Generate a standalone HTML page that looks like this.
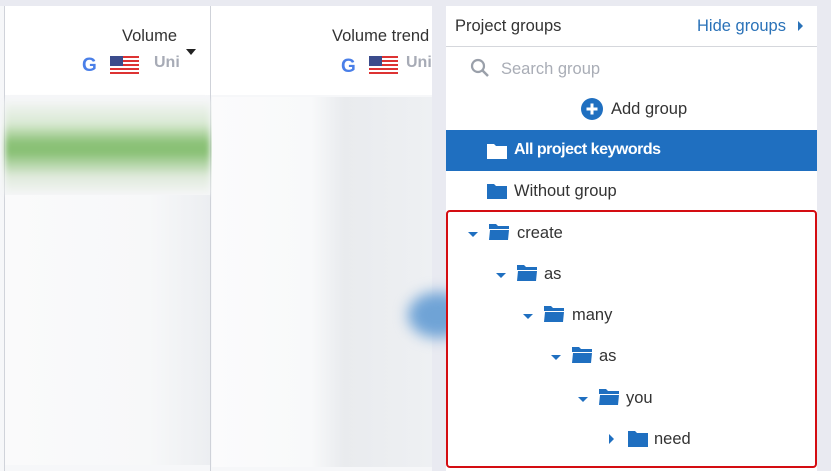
<!DOCTYPE html>
<html><head><style>
body{margin:0;width:831px;height:471px;background:#e9eaf1;font-family:"Liberation Sans",sans-serif;position:relative;overflow:hidden}
.abs{position:absolute}
.t{font-size:16px;color:#333}
</style></head><body>
<div class="abs" style="left:0;top:6px;width:432px;height:465px;background:#f6f7f9"></div>
<div class="abs" style="left:4px;top:6px;width:428px;height:89px;background:#fff"></div>
<div class="abs" style="left:4px;top:6px;width:1px;height:465px;background:#d0d3da"></div>
<div class="abs" style="left:210px;top:6px;width:1px;height:465px;background:#cfd2d9"></div>
<div class="abs" style="left:5px;top:100px;width:205px;height:95px;background:linear-gradient(#f4f5f6,#d9e9d3 25%,#8cc278 45%,#88c074 55%,#dfeadb 80%,#f4f5f6);filter:blur(3px)"></div>
<div class="abs" style="left:5px;top:195px;width:205px;height:270px;background:linear-gradient(90deg,#fafafb,#f7f8f9 70%,#eceef1)"></div>
<div class="abs" style="left:212px;top:97px;width:220px;height:370px;background:linear-gradient(90deg,#fbfbfc,#f8f9fa 45%,#e9ebee 60%,#eef0f3)"></div>
<div class="abs" style="left:408px;top:292px;width:60px;height:46px;border-radius:50%;background:#6fa3d6;filter:blur(7px)"></div>
<div class="abs t" style="left:122px;top:27px;font-size:16.5px">Volume</div>
<div class="abs" style="left:186px;top:49px;border-left:5px solid transparent;border-right:5px solid transparent;border-top:6px solid #222"></div>
<div class="abs" style="left:82px;top:55px;font-weight:bold;color:#4a7fe8;font-size:19px">G</div>
<div class="abs" style="left:110px;top:56px;width:29px;height:20px;background:repeating-linear-gradient(#d33 0 2px,#fff 2px 4px)"><div style="width:13px;height:10px;background:#3b4c8c"></div></div>
<div class="abs" style="left:154px;top:54px;color:#a7abb6;font-weight:bold;font-size:16px">Uni</div>
<div class="abs t" style="left:332px;top:27px;font-size:16.5px">Volume trend</div>
<div class="abs" style="left:341px;top:56px;font-weight:bold;color:#4a7fe8;font-size:19px">G</div>
<div class="abs" style="left:369px;top:56px;width:29px;height:20px;background:repeating-linear-gradient(#d33 0 2px,#fff 2px 4px)"><div style="width:13px;height:10px;background:#3b4c8c"></div></div>
<div class="abs" style="left:406px;top:54px;color:#a7abb6;font-weight:bold;font-size:16px">Uni</div>

<div class="abs" style="left:446px;top:6px;width:371px;height:465px;background:#fff"></div>
<div class="abs t" style="left:455px;top:17px;font-size:16.5px">Project groups</div>
<div class="abs" style="left:697px;top:17px;font-size:16.5px;color:#2a72b8">Hide groups</div>
<div class="abs" style="left:798px;top:21px;border-top:5px solid transparent;border-bottom:5px solid transparent;border-left:5px solid #2a72b8"></div>
<div class="abs" style="left:446px;top:46px;width:371px;height:1px;background:#d5d7dc"></div>
<svg class="abs" style="left:470px;top:58px" width="20" height="20"><circle cx="8" cy="8" r="6" fill="none" stroke="#9aa0aa" stroke-width="2.2"/><line x1="12.5" y1="12.5" x2="18" y2="18" stroke="#9aa0aa" stroke-width="2.5"/></svg>
<div class="abs" style="left:501px;top:60px;font-size:16.5px;color:#a9adb6">Search group</div>
<svg class="abs" style="left:581px;top:98px" width="22" height="22"><circle cx="11" cy="11" r="11" fill="#1f6fc0"/><path d="M11 5.5v11M5.5 11h11" stroke="#fff" stroke-width="3"/></svg>
<div class="abs t" style="left:611px;top:100px;font-size:16.5px">Add group</div>
<div class="abs" style="left:446px;top:130px;width:371px;height:41px;background:#1f6fc0"></div>
<svg class="abs" style="left:487px;top:143px" width="20" height="16"><path d="M0 1h7l2 2h11v13H0z" fill="#fff"/></svg>
<div class="abs" style="left:514px;top:141px;font-size:16px;color:#fff;font-weight:bold;letter-spacing:-0.5px">All project keywords</div>
<svg class="abs" style="left:487px;top:183px" width="20" height="16"><path d="M0 1h7l2 2h11v13H0z" fill="#1f6fc0"/></svg>
<div class="abs t" style="left:514px;top:182px;font-size:16.5px">Without group</div>
<div class="abs" style="left:446px;top:210px;width:367px;height:254px;border:2px solid #d40d12;border-radius:4px"></div>

<svg width="0" height="0" style="position:absolute"><defs>
<g id="of"><path d="M0 0h7l2 2h11v3H0z" fill="#1f6fc0"/><path d="M1 6h19l-1 10H0z" fill="#1f6fc0"/></g>
</defs></svg>
<div class="abs" style="left:468px;top:232px;border-left:5px solid transparent;border-right:5px solid transparent;border-top:5px solid #1f6fc0"></div>
<svg class="abs" style="left:489px;top:224px" width="21" height="17"><use href="#of"/></svg>
<div class="abs t" style="left:517px;top:224px;font-size:16.5px">create</div>
<div class="abs" style="left:496px;top:273px;border-left:5px solid transparent;border-right:5px solid transparent;border-top:5px solid #1f6fc0"></div>
<svg class="abs" style="left:517px;top:265px" width="21" height="17"><use href="#of"/></svg>
<div class="abs t" style="left:544px;top:265px;font-size:16.5px">as</div>
<div class="abs" style="left:523px;top:314px;border-left:5px solid transparent;border-right:5px solid transparent;border-top:5px solid #1f6fc0"></div>
<svg class="abs" style="left:544px;top:306px" width="21" height="17"><use href="#of"/></svg>
<div class="abs t" style="left:572px;top:306px;font-size:16.5px">many</div>
<div class="abs" style="left:551px;top:355px;border-left:5px solid transparent;border-right:5px solid transparent;border-top:5px solid #1f6fc0"></div>
<svg class="abs" style="left:572px;top:347px" width="21" height="17"><use href="#of"/></svg>
<div class="abs t" style="left:599px;top:347px;font-size:16.5px">as</div>
<div class="abs" style="left:578px;top:397px;border-left:5px solid transparent;border-right:5px solid transparent;border-top:5px solid #1f6fc0"></div>
<svg class="abs" style="left:599px;top:389px" width="21" height="17"><use href="#of"/></svg>
<div class="abs t" style="left:626px;top:389px;font-size:16.5px">you</div>
<div class="abs" style="left:609px;top:434px;border-top:5px solid transparent;border-bottom:5px solid transparent;border-left:5px solid #1f6fc0"></div>
<svg class="abs" style="left:628px;top:430px" width="20" height="17"><path d="M0 1h7l2 2h11v14H0z" fill="#1f6fc0"/></svg>
<div class="abs t" style="left:654px;top:430px;font-size:16.5px">need</div>
</body></html>
